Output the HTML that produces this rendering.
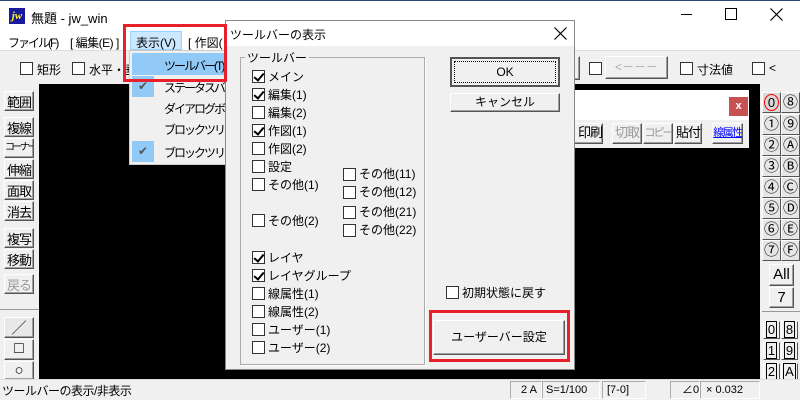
<!DOCTYPE html>
<html><head><meta charset="utf-8"><style>
*{box-sizing:border-box;margin:0;padding:0}
body{width:800px;height:400px;overflow:hidden;background:#f0f0f0;font:12px "Liberation Sans","Noto Sans CJK JP",sans-serif;color:#000;position:relative}
.a{position:absolute;white-space:nowrap}
.cb{position:absolute;width:13px;height:13px;border:1px solid #333;background:#fff}
.cb.k::after{content:"";position:absolute;left:3px;top:0px;width:4px;height:8px;border:solid #000;border-width:0 2px 2px 0;transform:rotate(40deg)}
.btn{position:absolute;white-space:nowrap;overflow:hidden;background:#f0f0f0;border:1px solid;border-color:#fff #555 #555 #fff;box-shadow:inset -1px -1px #a0a0a0;text-align:center}
.cir{position:absolute;width:19px;height:21px;background:#e6e6e6;border:1px solid;border-color:#fff #555 #555 #fff;text-align:center;font-size:15px;line-height:19px}
.bx{position:absolute;width:17px;height:18px;background:#f0f0f0;border:1px solid;border-color:#fff #555 #555 #fff;text-align:center;font-size:13px;line-height:16px}
.bx span{border:1px solid #000;padding:0 1px}
.n{letter-spacing:-2px}
</style></head><body>
<!-- title -->
<div class="a" style="left:0;top:0;width:800px;height:30px;background:#fff;border-top:1px solid #2b4a77"></div>
<div class="a" style="left:9px;top:8px;width:16px;height:16px;background:#1a1aa0;color:#ff0;font:bold italic 11px 'Liberation Serif';line-height:16px;text-align:center">jw</div>
<div class="a" style="left:31px;top:8px;font-size:13px">無題 - jw_win</div>
<div class="a" style="left:681px;top:14px;width:11px;height:1px;background:#000"></div>
<div class="a" style="left:725px;top:8px;width:12px;height:12px;border:1px solid #000"></div>
<svg class="a" style="left:770px;top:8px" width="13" height="13"><path d="M0.5 0.5L12.5 12.5M12.5 0.5L0.5 12.5" stroke="#000" stroke-width="1.2"/></svg>
<!-- menu -->
<div class="a" style="left:0;top:30px;width:800px;height:21px;background:#fff;border-bottom:1px solid #ddd"></div>
<div class="a n" style="left:8px;top:34px">ファイル(F)</div>
<div class="a" style="left:70px;top:34px;letter-spacing:-0.5px">[ 編集(E) ]</div>
<div class="a" style="left:130px;top:31px;width:52px;height:19px;background:#cce8ff;border:1px solid #99d1ff"></div>
<div class="a" style="left:136px;top:34px">表示(V)</div>
<div class="a" style="left:188px;top:34px">[ 作図(</div>
<!-- toolbar -->
<div class="cb" style="left:20px;top:62px"></div><div class="a" style="left:37px;top:61px">矩形</div>
<div class="cb" style="left:72px;top:62px"></div><div class="a" style="left:89px;top:61px">水平・垂</div>
<div class="btn" style="left:560px;top:56px;width:20px;height:24px"></div>
<div class="cb" style="left:589px;top:62px"></div>
<div class="btn" style="left:605px;top:56px;width:63px;height:23px;color:#aaa;line-height:20px">&lt;－－－</div>
<div class="cb" style="left:680px;top:62px"></div><div class="a" style="left:697px;top:61px">寸法値</div>
<div class="cb" style="left:752px;top:62px"></div><div class="a" style="left:769px;top:61px">&lt;</div>
<!-- canvas -->
<div class="a" style="left:39px;top:84px;width:721px;height:295px;background:#000"></div>
<!-- left buttons -->
<div class="btn" style="left:4px;top:91px;width:30px;height:20px;font-size:13px;letter-spacing:-1px">範囲</div>
<div class="btn" style="left:4px;top:117px;width:30px;height:20px;font-size:13px;letter-spacing:-1px">複線</div>
<div class="btn" style="left:4px;top:138px;width:30px;height:20px;font-size:10px;letter-spacing:-2.5px;line-height:18px">コーナー</div>
<div class="btn" style="left:4px;top:159px;width:30px;height:20px;font-size:13px;letter-spacing:-1px">伸縮</div>
<div class="btn" style="left:4px;top:180px;width:30px;height:20px;font-size:13px;letter-spacing:-1px">面取</div>
<div class="btn" style="left:4px;top:201px;width:30px;height:20px;font-size:13px;letter-spacing:-1px">消去</div>
<div class="btn" style="left:4px;top:228px;width:30px;height:20px;font-size:13px;letter-spacing:-1px">複写</div>
<div class="btn" style="left:4px;top:249px;width:30px;height:20px;font-size:13px;letter-spacing:-1px">移動</div>
<div class="btn" style="left:4px;top:274px;width:30px;height:20px;font-size:13px;letter-spacing:-1px;color:#999">戻る</div>
<div class="a" style="left:0;top:309px;width:39px;height:1px;background:#999"></div>
<div class="btn" style="left:4px;top:317px;width:30px;height:21px;background:#e8e8e8;font-size:14px">╱</div>
<div class="btn" style="left:4px;top:339px;width:30px;height:21px;font-size:16px;line-height:17px">□</div>
<div class="btn" style="left:4px;top:361px;width:30px;height:19px;font-size:15px;line-height:17px">○</div>
<!-- floating toolbar -->
<div class="a" style="left:560px;top:90px;width:189px;height:58px;background:#fff"></div>
<div class="a" style="left:560px;top:120px;width:189px;height:28px;background:#f0f0f0"></div>
<div class="a" style="left:729px;top:97px;width:19px;height:19px;background:#c75050;color:#fff;font-weight:bold;font-size:11px;text-align:center;line-height:18px">x</div>
<div class="btn" style="left:560px;top:123px;width:43px;height:21px;line-height:18px;font-size:13px;text-align:right;letter-spacing:-1px">印刷</div>
<div class="btn" style="left:612px;top:123px;width:30px;height:21px;line-height:18px;font-size:13px;color:#999;letter-spacing:-1px">切取</div>
<div class="btn" style="left:643px;top:123px;width:30px;height:21px;line-height:18px;font-size:11px;color:#999;letter-spacing:-2px">コピー</div>
<div class="btn" style="left:674px;top:123px;width:28px;height:21px;line-height:18px;font-size:13px;letter-spacing:-1px">貼付</div>
<div class="btn" style="left:712px;top:123px;width:31px;height:21px;line-height:18px;font-size:11px;letter-spacing:-1.5px;color:#00f;text-decoration:underline">線属性</div>
<!-- right panel -->
<div class="a" style="left:760px;top:84px;width:40px;height:296px;background:#f0f0f0"></div>
<div class="cir" style="left:762px;top:92px;background:#d8d8d8;color:#000"><span style="display:inline-block;width:15px;height:17px;border:1px solid red;border-radius:50%;font-size:13px;line-height:15px">0</span></div>
<div class="cir" style="left:781px;top:92px">⑧</div>
<div class="cir" style="left:762px;top:114px">①</div><div class="cir" style="left:781px;top:114px">⑨</div>
<div class="cir" style="left:762px;top:135px">②</div><div class="cir" style="left:781px;top:135px">Ⓐ</div>
<div class="cir" style="left:762px;top:156px">③</div><div class="cir" style="left:781px;top:156px">Ⓑ</div>
<div class="cir" style="left:762px;top:177px">④</div><div class="cir" style="left:781px;top:177px">Ⓒ</div>
<div class="cir" style="left:762px;top:198px">⑤</div><div class="cir" style="left:781px;top:198px">Ⓓ</div>
<div class="cir" style="left:762px;top:219px">⑥</div><div class="cir" style="left:781px;top:219px">Ⓔ</div>
<div class="cir" style="left:762px;top:240px">⑦</div><div class="cir" style="left:781px;top:240px">Ⓕ</div>
<div class="btn" style="left:769px;top:264px;width:25px;height:22px;font-size:15px;line-height:20px">All</div>
<div class="btn" style="left:769px;top:287px;width:25px;height:21px;font-size:15px;line-height:19px">7</div>
<div class="a" style="left:762px;top:311px;width:38px;height:1px;background:#999"></div>
<div class="bx" style="left:763px;top:321px"><span>0</span></div><div class="bx" style="left:781px;top:321px"><span>8</span></div>
<div class="bx" style="left:763px;top:342px"><span>1</span></div><div class="bx" style="left:781px;top:342px"><span>9</span></div>
<div class="bx" style="left:763px;top:363px"><span>2</span></div><div class="bx" style="left:781px;top:363px"><span>A</span></div>
<!-- status bar -->
<div class="a" style="left:0;top:379px;width:800px;height:21px;background:#f0f0f0;border-top:1px solid #ddd"></div>
<div class="a" style="left:2px;top:382px;font-size:12px;letter-spacing:-0.5px">ツールバーの表示/非表示</div>
<div class="a" style="left:510px;top:381px;width:32px;height:18px;border:1px solid;border-color:#aaa #fff #fff #aaa;padding-left:10px;font-size:11px;line-height:16px">2 A</div>
<div class="a" style="left:542px;top:381px;width:58px;height:18px;border:1px solid;border-color:#aaa #fff #fff #aaa;padding-left:3px;font-size:11px;line-height:16px">S=1/100</div>
<div class="a" style="left:602px;top:381px;width:44px;height:18px;border:1px solid;border-color:#aaa #fff #fff #aaa;padding-left:4px;font-size:11px;line-height:16px">[7-0]</div>
<div class="a" style="left:670px;top:381px;width:30px;height:18px;border:1px solid;border-color:#aaa #fff #fff #aaa;padding-left:11px;font-size:11px;line-height:16px">∠0</div>
<div class="a" style="left:700px;top:381px;width:60px;height:18px;border:1px solid;border-color:#aaa #fff #fff #aaa;padding-left:5px;font-size:11px;line-height:16px">× 0.032</div>
<!-- dropdown -->
<div class="a" style="left:129px;top:50px;width:98px;height:115px;background:#f0f0f0;border:1px solid #ccc;box-shadow:2px 2px 3px rgba(0,0,0,.3)"></div>
<div class="a" style="left:132px;top:53px;width:93px;height:22px;background:#91c9f7"></div>
<div class="a" style="left:132px;top:76px;width:22px;height:21px;background:#91c9f7;color:#555;text-align:center;line-height:21px">✔</div>
<div class="a" style="left:132px;top:141px;width:22px;height:21px;background:#91c9f7;color:#555;text-align:center;line-height:21px">✔</div>
<div class="a n" style="left:164px;top:57px">ツールバー(T)</div>
<div class="a n" style="left:164px;top:79px">ステータスバー</div>
<div class="a n" style="left:164px;top:100px">ダイアログボックス</div>
<div class="a n" style="left:164px;top:121px">ブロックツリー</div>
<div class="a n" style="left:164px;top:144px">ブロックツリー</div>
<!-- dialog -->
<div class="a" style="left:225px;top:20px;width:350px;height:350px;background:#f0f0f0;border:1px solid #888;overflow:hidden">
 <div class="a" style="left:0;top:0;width:350px;height:25px;background:#fff"></div>
 <div class="a" style="left:4px;top:5px">ツールバーの表示</div>
 <svg class="a" style="left:328px;top:6px" width="13" height="13"><path d="M0.5 0.5L12.5 12.5M12.5 0.5L0.5 12.5" stroke="#000" stroke-width="1.2"/></svg>
</div>
<div class="a" style="left:123px;top:24px;width:104px;height:58px;border:3px solid #e8202a"></div>
<div class="a" style="left:240px;top:57px;width:185px;height:308px;border:1px solid #aaa;box-shadow:1px 1px #fff"></div>
<div class="a" style="left:245px;top:49px;background:#f0f0f0;padding:0 2px">ツールバー</div>
<div class="cb k" style="left:252px;top:70px"></div><div class="a" style="left:268px;top:68px">メイン</div>
<div class="cb k" style="left:252px;top:88px"></div><div class="a" style="left:268px;top:86px">編集(1)</div>
<div class="cb" style="left:252px;top:106px"></div><div class="a" style="left:268px;top:104px">編集(2)</div>
<div class="cb k" style="left:252px;top:124px"></div><div class="a" style="left:268px;top:122px">作図(1)</div>
<div class="cb" style="left:252px;top:142px"></div><div class="a" style="left:268px;top:140px">作図(2)</div>
<div class="cb" style="left:252px;top:160px"></div><div class="a" style="left:268px;top:158px">設定</div>
<div class="cb" style="left:252px;top:178px"></div><div class="a" style="left:268px;top:176px">その他(1)</div>
<div class="cb" style="left:252px;top:214px"></div><div class="a" style="left:268px;top:212px">その他(2)</div>
<div class="cb" style="left:343px;top:168px"></div><div class="a" style="left:359px;top:165px">その他(11)</div>
<div class="cb" style="left:343px;top:186px"></div><div class="a" style="left:359px;top:183px">その他(12)</div>
<div class="cb" style="left:343px;top:206px"></div><div class="a" style="left:359px;top:203px">その他(21)</div>
<div class="cb" style="left:343px;top:224px"></div><div class="a" style="left:359px;top:221px">その他(22)</div>
<div class="cb k" style="left:252px;top:251px"></div><div class="a" style="left:268px;top:249px">レイヤ</div>
<div class="cb k" style="left:252px;top:269px"></div><div class="a" style="left:268px;top:267px">レイヤグループ</div>
<div class="cb" style="left:252px;top:287px"></div><div class="a" style="left:268px;top:285px">線属性(1)</div>
<div class="cb" style="left:252px;top:305px"></div><div class="a" style="left:268px;top:303px">線属性(2)</div>
<div class="cb" style="left:252px;top:323px"></div><div class="a" style="left:268px;top:321px">ユーザー(1)</div>
<div class="cb" style="left:252px;top:341px"></div><div class="a" style="left:268px;top:339px">ユーザー(2)</div>
<div class="btn" style="left:450px;top:57px;width:110px;height:30px;border:2px solid #555;box-shadow:none;line-height:26px"><div style="position:absolute;left:2px;top:2px;right:2px;bottom:2px;border:1px dotted #000"></div>OK</div>
<div class="btn" style="left:450px;top:93px;width:110px;height:19px;line-height:16px">キャンセル</div>
<div class="cb" style="left:446px;top:286px"></div><div class="a" style="left:462px;top:284px">初期状態に戻す</div>
<div class="btn" style="left:433px;top:320px;width:132px;height:35px;line-height:32px">ユーザーバー設定</div>
<div class="a" style="left:429px;top:310px;width:141px;height:52px;border:3px solid #e8202a"></div>
</body></html>
